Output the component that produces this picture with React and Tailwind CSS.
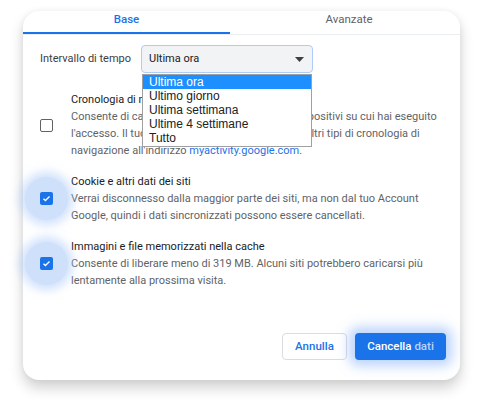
import { useState } from 'react'

const options = ['Ultima ora', 'Ultimo giorno', 'Ultima settimana', 'Ultime 4 settimane', 'Tutto']

const CheckBox = ({ checked }) => (
  <div className="relative w-[13px] h-[13px] shrink-0">
    {checked && (
      <div className="absolute left-[-15px] top-[-15px] w-[43px] h-[43px] rounded-full bg-[#cfe0fb] shadow-[0_0_10px_5px_rgba(170,200,250,0.55)]" />
    )}
    {checked ? (
      <div className="relative w-[13px] h-[13px] rounded-[2px] bg-[#1a73e8] flex items-center justify-center">
        <svg width="9" height="9" viewBox="0 0 12 12">
          <path d="M2 6.2l2.6 2.6L10 3.4" fill="none" stroke="#fff" strokeWidth="1.8" />
        </svg>
      </div>
    ) : (
      <div className="relative w-[13px] h-[13px] rounded-[2px] border-[1.5px] border-[#5f6368]" />
    )}
  </div>
)

const Row = ({ checked, title, children }) => (
  <div className="flex items-center">
    <div className="w-[31px] shrink-0">
      <CheckBox checked={checked} />
    </div>
    <div className="w-[372px] text-[11px] leading-[17px]">
      <div className="text-[#202124]">{title}</div>
      <div className="text-[#5f6368]">{children}</div>
    </div>
  </div>
)

export default function App() {
  const [tab] = useState('base')

  return (
    <div className="w-[491px] h-[404px] bg-white pt-[11px] pl-[23px] font-['Roboto',sans-serif]">
      <div className="w-[437px] h-[369px] bg-white rounded-[16px] shadow-[0_8px_14px_rgba(0,0,0,0.18),0_0_6px_rgba(0,0,0,0.06)] flex flex-col">
        {/* Tabs */}
        <div className="flex h-[24px] border-b border-[#eceff1]">
          <div className={`w-[207px] flex items-start justify-center text-[11.5px] font-medium border-b-2 ${tab === 'base' ? 'text-[#1a73e8] border-[#1a73e8]' : 'border-transparent'}`}>
            <span>Base</span>
          </div>
          <div className="flex-1 flex items-start justify-center text-[11.5px] text-[#5f6368] pl-[8px]">
            <span>Avanzate</span>
          </div>
        </div>

        {/* Body */}
        <div className="px-[17px] pt-[10px] flex-1 flex flex-col">
          <div className="flex items-center relative">
            <span className="text-[11px] text-[#3c4043] w-[101px]">Intervallo di tempo</span>
            <div className="relative">
              <div className="w-[172px] h-[28px] rounded-[4px] border border-[#aecbfa] bg-[#f1f3f4] flex items-center justify-between pl-[7px] pr-[8px] text-[11px] text-[#202124]">
                <span>Ultima ora</span>
                <svg width="9" height="5" viewBox="0 0 9 5"><path d="M0 0h9L4.5 5z" fill="#3c4043" /></svg>
              </div>
              <div className="absolute left-[1px] top-[29px] w-[170px] bg-white border border-[#a0a0a0] z-10 font-['Liberation_Sans',sans-serif] text-[12px] leading-[14px] pb-[1px]">
                {options.map((o, i) => (
                  <div key={o} className={`px-[6px] ${i === 0 ? 'bg-[#1e8fff] text-white' : 'text-[#202124]'}`}>{o}</div>
                ))}
              </div>
            </div>
          </div>

          <div className="mt-[18px] flex flex-col gap-[14px]">
            <Row checked={false} title="Cronologia di navigazione">
              Consente di cancellare la cronologia da tutti i dispositivi su cui hai eseguito l'accesso. Il tuo Account Google potrebbe avere altri tipi di cronologia di navigazione all'indirizzo <span className="text-[#1a73e8]">myactivity.google.com</span>.
            </Row>
            <Row checked title="Cookie e altri dati dei siti">
              Verrai disconnesso dalla maggior parte dei siti, ma non dal tuo Account Google, quindi i dati sincronizzati possono essere cancellati.
            </Row>
            <Row checked title="Immagini e file memorizzati nella cache">
              Consente di liberare meno di 319 MB. Alcuni siti potrebbero caricarsi più lentamente alla prossima visita.
            </Row>
          </div>

          <div className="mt-auto mb-[20px] mr-[-3px] flex justify-end gap-[8px]">
            <button className="w-[65px] h-[27px] rounded-[4px] border border-[#dadce0] bg-white text-[#1a73e8] text-[11.5px] font-medium">Annulla</button>
            <button className="w-[91px] h-[27px] rounded-[4px] bg-[#1a73e8] text-white text-[11.5px] font-medium shadow-[0_0_12px_6px_rgba(120,170,250,0.5)]">
              Cancella <span className="text-[#b9d3fb]">dati</span>
            </button>
          </div>
        </div>
      </div>
    </div>
  )
}
